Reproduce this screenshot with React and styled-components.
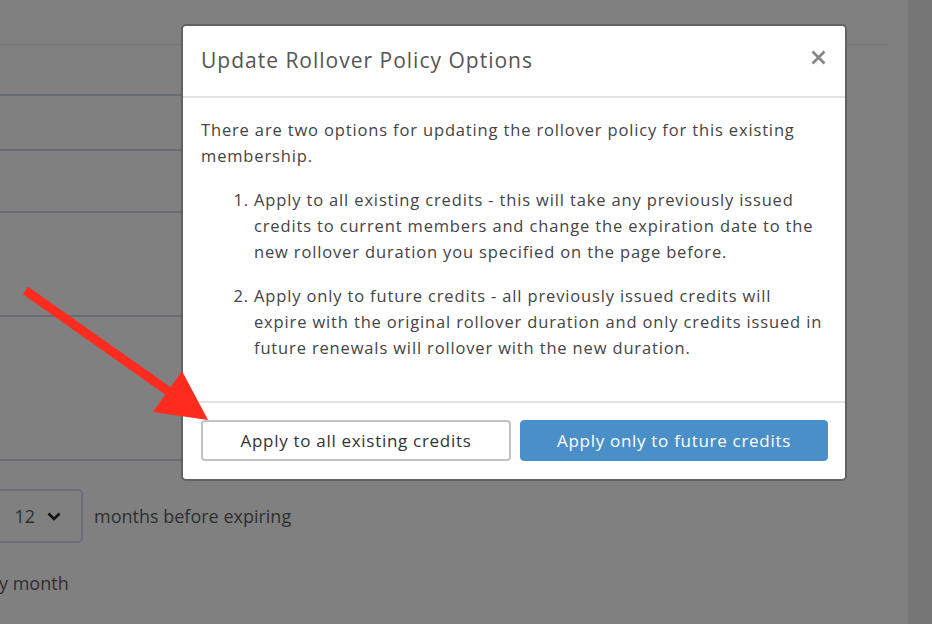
import React from "react";
import styled, { createGlobalStyle } from "styled-components";

const Global = createGlobalStyle`
  html, body { margin: 0; padding: 0; }
  body {
    background: #808080;
    overflow: hidden;
    font-family: "Open Sans", "Liberation Sans", sans-serif;
  }
  * { box-sizing: border-box; }
`;

const Screen = styled.div`
  position: relative;
  width: 932px;
  height: 624px;
  display: flex;
  overflow: hidden;
  background: #808080;
`;

const Page = styled.div`
  width: 908px;
  display: flex;
  flex-direction: column;
`;

const ScrollStrip = styled.div`
  width: 24px;
  height: 624px;
  background: #767676;
`;

const TopBar = styled.div`
  height: 45px;
  margin-right: 20px;
  border-bottom: 1px solid #747474;
`;

const FormColumn = styled.div`
  width: 300px;
  display: flex;
  flex-direction: column;
`;

const FormRow = styled.div`
  height: ${(p) => p.$h}px;
  border-bottom: 2px solid #686b70;
`;

const SelectRow = styled.div`
  margin-top: 28px;
  display: flex;
  align-items: center;
  gap: 11px;
`;

const FakeSelect = styled.div`
  width: 120px;
  height: 54px;
  margin-left: -37px;
  border: 2px solid #6c6f74;
  border-radius: 5px;
  display: flex;
  align-items: center;
  justify-content: flex-end;
  gap: 12px;
  padding-right: 20px;
  font-size: 18px;
  color: #2f2f2f;
`;

const DimText = styled.span`
  font-size: 18px;
  color: #2f2f2f;
`;

const FrequencyLine = styled.div`
  margin-top: 28px;
  margin-left: -1px;
  font-size: 18px;
  color: #2f2f2f;
`;

const Modal = styled.div`
  position: absolute;
  left: 181px;
  top: 24px;
  width: 666px;
  height: 457px;
  background: #fff;
  border: 2px solid #626262;
  border-radius: 5px;
  display: flex;
  flex-direction: column;
`;

const ModalHeader = styled.div`
  height: 72px;
  padding: 0 18px 3px 18px;
  display: flex;
  align-items: center;
  justify-content: space-between;
  border-bottom: 2px solid #e2e2e2;
`;

const Title = styled.h2`
  margin: 0;
  font-size: 21px;
  letter-spacing: 1px;
  font-weight: 400;
  color: #555;
`;

const CloseButton = styled.button`
  border: 0;
  background: none;
  padding: 0;
  margin-right: 1px;
  margin-top: -4px;
  width: 16px;
  height: 16px;
  display: flex;
  align-items: center;
  justify-content: center;
`;

const ModalBody = styled.div`
  padding: 19px 18px 0 18px;
  flex: 1;
  font-size: 16.5px;
  letter-spacing: 0.85px;
  line-height: 26px;
  color: #444;
`;

const Para = styled.p`
  margin: 0 0 18px 0;
`;

const OptionList = styled.ol`
  margin: 0;
  padding-left: 53px;
`;

const OptionItem = styled.li`
  margin-bottom: 18px;
`;

const ModalFooter = styled.div`
  border-top: 2px solid #e2e2e2;
  padding: 17px 17px 18px 18px;
  display: flex;
  gap: 9px;
`;

const Button = styled.button`
  flex: 1;
  height: 41px;
  border-radius: 4px;
  font-family: inherit;
  font-size: 17px;
  letter-spacing: 0.7px;
  border: ${(p) => (p.$primary ? "1px solid #4a8fc8" : "2px solid #c2c2c2")};
  background: ${(p) => (p.$primary ? "#4a8fc8" : "#fff")};
  color: ${(p) => (p.$primary ? "#fff" : "#333")};
`;

const Annotation = styled.svg`
  position: absolute;
  left: 0;
  top: 0;
  pointer-events: none;
`;

export default function App() {
  return (
    <>
      <Global />
      <Screen>
        <Page>
          <TopBar />
          <FormColumn>
            <FormRow $h={51} />
            <FormRow $h={55} />
            <FormRow $h={62} />
            <FormRow $h={104} />
            <FormRow $h={144} />
          </FormColumn>
          <SelectRow>
            <FakeSelect>
              <span>12</span>
              <svg width="14" height="9" viewBox="0 0 14 9">
                <path d="M1.5 1.5 L7 7 L12.5 1.5" fill="none" stroke="#111" strokeWidth="2.6" />
              </svg>
            </FakeSelect>
            <DimText>months before expiring</DimText>
          </SelectRow>
          <FrequencyLine>y month</FrequencyLine>
        </Page>
        <ScrollStrip />

        <Modal>
          <ModalHeader>
            <Title>Update Rollover Policy Options</Title>
            <CloseButton aria-label="Close">
              <svg width="15" height="15" viewBox="0 0 15 15">
                <path d="M1.5 1.5 L13.5 13.5 M13.5 1.5 L1.5 13.5" stroke="#858585" strokeWidth="2.7" />
              </svg>
            </CloseButton>
          </ModalHeader>
          <ModalBody>
            <Para>
              There are two options for updating the rollover policy for this existing membership.
            </Para>
            <OptionList>
              <OptionItem>
                Apply to all existing credits - this will take any previously issued credits to
                current members and change the expiration date to the new rollover duration you
                specified on the page before.
              </OptionItem>
              <OptionItem>
                Apply only to future credits - all previously issued credits will expire with the
                original rollover duration and only credits issued in future renewals will rollover
                with the new duration.
              </OptionItem>
            </OptionList>
          </ModalBody>
          <ModalFooter>
            <Button>Apply to all existing credits</Button>
            <Button $primary>Apply only to future credits</Button>
          </ModalFooter>
        </Modal>

        <Annotation width="932" height="624" viewBox="0 0 932 624">
          <line x1="25.5" y1="290.5" x2="178" y2="398" stroke="#fe2b1e" strokeWidth="9" />
          <polygon points="182,371 153,412 208,420" fill="#fe2b1e" />
        </Annotation>
      </Screen>
    </>
  );
}
